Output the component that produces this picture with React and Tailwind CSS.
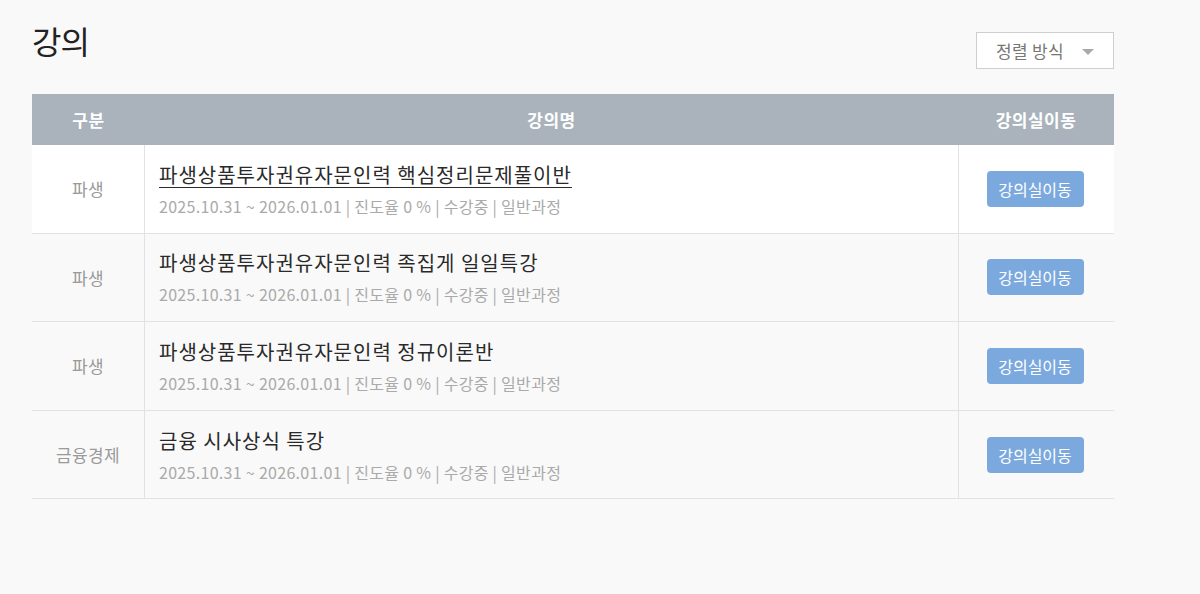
const courses = [
  { cat: "파생", title: "파생상품투자권유자문인력 핵심정리문제풀이반", active: true },
  { cat: "파생", title: "파생상품투자권유자문인력 족집게 일일특강" },
  { cat: "파생", title: "파생상품투자권유자문인력 정규이론반" },
  { cat: "금융경제", title: "금융 시사상식 특강" },
];

export default function App() {
  return (
    <div
      className="min-h-screen bg-[#f9f9f9] px-8 pt-[21px]"
      style={{ fontFamily: '"Noto Sans CJK KR", "Noto Sans", sans-serif' }}
    >
      <div className="w-[1082px]">
        {/* title + sort */}
        <div className="flex items-start justify-between">
          <h1 className="text-[32px] leading-[38px] text-[#222] tracking-[-1px]">강의</h1>
          <button className="mt-[11px] flex h-[37px] w-[138px] items-center justify-between border border-[#cfcfcf] bg-white pl-[19px] pr-[19px] text-[17px] text-[#777] tracking-[0.3px]">
            <span>정렬 방식</span>
            <span className="mt-[2px] h-0 w-0 border-x-[6px] border-t-[6px] border-x-transparent border-t-[#aaa]" />
          </button>
        </div>

        {/* table */}
        <div className="mt-[25px]">
          <div className="flex h-[51px] items-center bg-[#aab3bc] text-[17px] font-bold tracking-[0.5px] text-white">
            <div className="w-[113px] text-center">구분</div>
            <div className="flex-1 text-center">강의명</div>
            <div className="w-[156px] text-center">강의실이동</div>
          </div>

          {courses.map((c, i) => (
            <div
              key={i}
              className={`flex h-[88.6px] border-b border-[#e2e2e2] ${c.active ? "bg-white" : ""}`}
            >
              <div className="flex w-[113px] items-center justify-center border-r border-[#e2e2e2] text-[17px] tracking-[0.3px] text-[#9a9a9a]">
                {c.cat}
              </div>
              <div className="flex flex-1 flex-col justify-center pl-[14px]">
                <div
                  className={`text-[20px] leading-[26px] tracking-[1px] text-[#2a2a2a] ${c.active ? "underline decoration-1 underline-offset-[4px]" : ""}`}
                >
                  {c.title}
                </div>
                <div className="mt-[8px] text-[16px] leading-[20px] tracking-[0.3px] text-[#aaa]">
                  2025.10.31 ~ 2026.01.01 | 진도율 0 % | 수강중 | 일반과정
                </div>
              </div>
              <div className="flex w-[156px] items-center justify-center border-l border-[#e2e2e2]">
                <button className="mr-[3px] h-[36px] w-[97px] rounded-[4px] bg-[#7ba9de] text-[16px] text-white">
                  강의실이동
                </button>
              </div>
            </div>
          ))}
        </div>
      </div>
    </div>
  );
}
